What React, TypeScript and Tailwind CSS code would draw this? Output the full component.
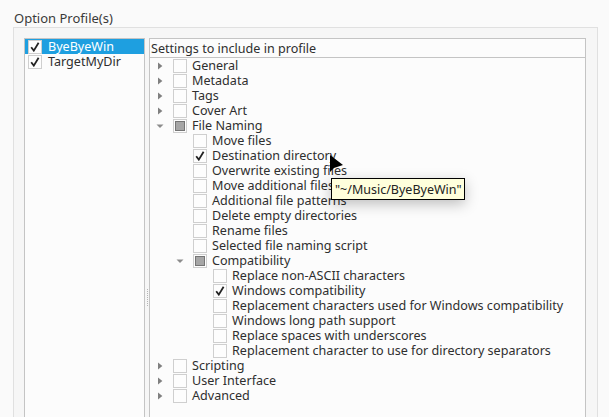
const font = "[font-family:'Noto_Sans','Open_Sans',sans-serif]";

type Item = { label: string; depth: number; state?: "none" | "checked" | "partial"; arrow?: "right" | "down" };

const items: Item[] = [
  { label: "General", depth: 0, arrow: "right" },
  { label: "Metadata", depth: 0, arrow: "right" },
  { label: "Tags", depth: 0, arrow: "right" },
  { label: "Cover Art", depth: 0, arrow: "right" },
  { label: "File Naming", depth: 0, arrow: "down", state: "partial" },
  { label: "Move files", depth: 1 },
  { label: "Destination directory", depth: 1, state: "checked" },
  { label: "Overwrite existing files", depth: 1 },
  { label: "Move additional files", depth: 1 },
  { label: "Additional file patterns", depth: 1 },
  { label: "Delete empty directories", depth: 1 },
  { label: "Rename files", depth: 1 },
  { label: "Selected file naming script", depth: 1 },
  { label: "Compatibility", depth: 1, arrow: "down", state: "partial" },
  { label: "Replace non-ASCII characters", depth: 2 },
  { label: "Windows compatibility", depth: 2, state: "checked" },
  { label: "Replacement characters used for Windows compatibility", depth: 2 },
  { label: "Windows long path support", depth: 2 },
  { label: "Replace spaces with underscores", depth: 2 },
  { label: "Replacement character to use for directory separators", depth: 2 },
  { label: "Scripting", depth: 0, arrow: "right" },
  { label: "User Interface", depth: 0, arrow: "right" },
  { label: "Advanced", depth: 0, arrow: "right" },
];

function Check({ state = "none" }: { state?: Item["state"] }) {
  return (
    <span className="w-[14px] h-[14px] shrink-0 border border-[#cfcfcf] bg-[#fdfdfd] flex items-center justify-center">
      {state === "checked" && (
        <svg width="10" height="10" viewBox="0 0 10 10">
          <path d="M1.2 5.2 L3.8 8.6 L8.6 0.8" fill="none" stroke="#222222" strokeWidth="1.8" />
        </svg>
      )}
      {state === "partial" && <span className="w-[10px] h-[10px] border border-[#757575] bg-[#a6a6a6]" />}
    </span>
  );
}

function Arrow({ dir }: { dir: "right" | "down" }) {
  return (
    <svg width="8" height="8" viewBox="0 0 8 8" className="shrink-0">
      {dir === "right" ? <path d="M2 0.5 L6.4 4 L2 7.5 Z" fill="#808080" /> : <path d="M0.5 2.5 L7.5 2.5 L4 6 Z" fill="#8c8c8c" />}
    </svg>
  );
}

function Row({ item }: { item: Item }) {
  const indent = ["pl-[6px]", "pl-[26px]", "pl-[46px]"][item.depth];
  return (
    <div className={`flex items-center h-[15px] text-[12.58px] text-[#2f2f2f] whitespace-nowrap ${indent}`}>
      <span className="w-[17px] shrink-0 flex">{item.arrow && <Arrow dir={item.arrow} />}</span>
      <Check state={item.state} />
      <span className="ml-[5px] leading-[15px]">{item.label}</span>
    </div>
  );
}

export default function App() {
  return (
    <div className={`relative w-[609px] h-[417px] overflow-hidden bg-[#fafafa] ${font}`}>
      <div className="pl-[14px] pt-[10px] h-[17px] text-[13px] leading-[17px] text-[#3a3a3a]">Option Profile(s)</div>
      <div className="ml-[13px] mt-[10px] mr-[11px] h-[532px] border border-[#e0e0e0] bg-[#f6f6f6] pl-[10px] pr-[11px] pt-[10px] pb-[1px] flex">
        <div className="w-[121px] border border-[#c4c4c4] bg-[#fcfcfc] text-[12.58px] text-[#2f2f2f]">
          <div className="h-[15px] bg-[#1e9fe0] text-white flex items-center pl-[3px] whitespace-nowrap">
            <Check state="checked" />
            <span className="ml-[6px] leading-[15px]">ByeByeWin</span>
          </div>
          <div className="h-[15px] flex items-center pl-[3px] whitespace-nowrap">
            <Check state="checked" />
            <span className="ml-[6px] leading-[15px]">TargetMyDir</span>
          </div>
        </div>
        <div className="w-[4px] shrink-0 flex items-center justify-center">
          <div className="h-[17px] border-l border-dotted border-[#b5b5b5]" />
        </div>
        <div className="flex-1 border border-[#c4c4c4] bg-[#fcfcfc]">
          <div className="h-[19px] border-b border-[#c4c4c4] pl-[1px] text-[12.58px] leading-[19px] text-[#2f2f2f]">
            Settings to include in profile
          </div>
          {items.map((item) => (
            <Row key={item.label} item={item} />
          ))}
        </div>
      </div>
      <div className="absolute left-[331px] top-[178px] h-[22px] border border-black bg-[#ffffdc] px-[3px] text-[12.5px] leading-[21px] text-[#222] whitespace-nowrap shadow-[0_4px_14px_rgba(0,0,0,0.25)]">
        "~/Music/ByeByeWin"
      </div>
      <svg className="absolute left-[329px] top-[154px]" width="16" height="22" viewBox="0 0 16 22">
        <path d="M1 1 L1 18 L5 14 L14 11 Z" fill="#000" />
      </svg>
    </div>
  );
}
